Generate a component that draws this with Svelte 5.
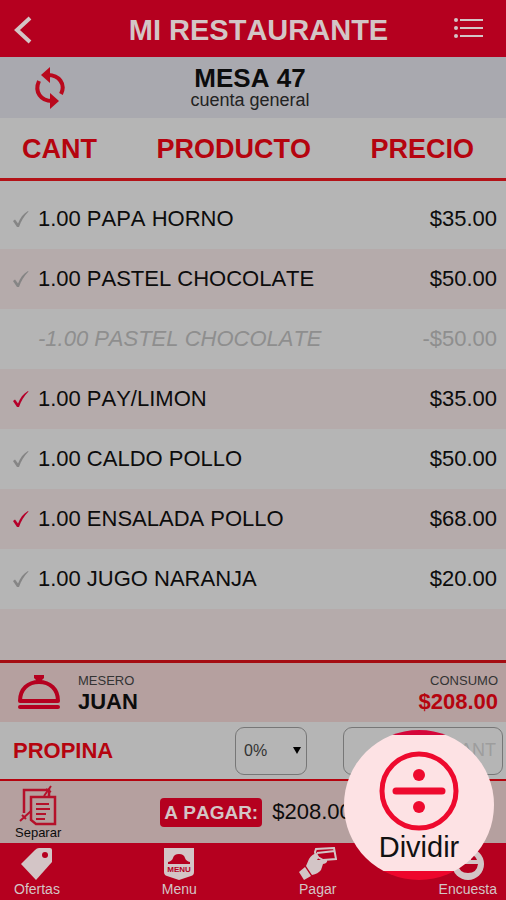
<script>
  let tip = $state("0");
  let customTip = $state("");

  const items = [
    { qty: "1.00", name: "PAPA HORNO", price: "$35.00", status: "pending" },
    { qty: "1.00", name: "PASTEL CHOCOLATE", price: "$50.00", status: "pending" },
    { qty: "-1.00", name: "PASTEL CHOCOLATE", price: "-$50.00", status: "cancelled" },
    { qty: "1.00", name: "PAY/LIMON", price: "$35.00", status: "done" },
    { qty: "1.00", name: "CALDO POLLO", price: "$50.00", status: "pending" },
    { qty: "1.00", name: "ENSALADA POLLO", price: "$68.00", status: "done" },
    { qty: "1.00", name: "JUGO NARANJA", price: "$20.00", status: "pending" }
  ];
</script>

<div class="app">
  <header class="topbar">
    <button class="icon-button" aria-label="Regresar">
      <svg width="20" height="30" viewBox="0 0 20 30">
        <path d="M17 3 L4 15 L17 27" fill="none" stroke="currentColor" stroke-width="4" />
      </svg>
    </button>
    <h1>MI RESTAURANTE</h1>
    <button class="icon-button" aria-label="Lista">
      <svg width="30" height="24" viewBox="0 0 30 24" fill="currentColor">
        <circle cx="2" cy="2" r="2" />
        <circle cx="2" cy="10" r="2" />
        <circle cx="2" cy="18" r="2" />
        <path d="M6 1h23v2H6z M6 9h23v2H6z M6 17h23v2H6z" />
      </svg>
    </button>
  </header>

  <section class="table-info">
    <button class="icon-button refresh" aria-label="Actualizar">
      <svg width="34" height="44" viewBox="0 0 34 44">
        <g fill="none" stroke="currentColor" stroke-width="4">
          <path d="M15 9 C26 9 33 18 28 28" />
          <path d="M19 35 C8 35 1 26 6 15" />
        </g>
        <path d="M17 1 V17 L8 9z M17 27 V43 L26 35z" fill="currentColor" />
      </svg>
    </button>
    <div class="table-name">
      <h2>MESA 47</h2>
      <p>cuenta general</p>
    </div>
  </section>

  <table>
    <thead>
      <tr>
        <th>CANT</th>
        <th>PRODUCTO</th>
        <th>PRECIO</th>
      </tr>
    </thead>
    <tbody>
      {#each items as item}
        <tr class={item.status}>
          <td class="qty">
            <span class="check">
              {#if item.status != "cancelled"}
                <svg width="17" height="18" viewBox="0 0 17 18">
                  <path d="M1 11 L3 9.500 L6 13.500 C8 8 11 4 16 1 L16.500 1.500 C12 6 9 11 7 17 L5 17z" fill="currentColor" />
                </svg>
              {/if}
            </span>
            {item.qty}
          </td>
          <td>{item.name}</td>
          <td class="price">{item.price}</td>
        </tr>
      {/each}
    </tbody>
  </table>
  <div class="filler"></div>

  <footer>
    <section class="summary">
      <svg class="bell" width="44" height="36" viewBox="0 0 44 36">
        <path d="M3 26 C3 14 11 7 22 7 C33 7 41 14 41 26z" fill="none" stroke="currentColor" stroke-width="4" stroke-linejoin="round" />
        <path d="M3 32 H41" stroke="currentColor" stroke-width="4" stroke-linecap="round" />
        <path d="M17 0 H27 V3 L25 5 V8 H19 V5 L17 3z" fill="currentColor" />
      </svg>
      <div class="waiter">
        <small>MESERO</small>
        <strong>JUAN</strong>
      </div>
      <div class="total">
        <small>CONSUMO</small>
        <strong>$208.00</strong>
      </div>
    </section>

    <section class="tip">
      <label for="tip">PROPINA</label>
      <div class="select">
        <select id="tip" bind:value={tip}>
          <option value="0">0%</option>
          <option value="10">10%</option>
          <option value="15">15%</option>
        </select>
        <svg width="8" height="7" viewBox="0 0 8 7"><path d="M0 0h8L4 7z" /></svg>
      </div>
      <input aria-label="Cantidad" placeholder="CANT" bind:value={customTip} />
    </section>

    <section class="pay">
      <button class="split">
        <svg width="38" height="42" viewBox="0 0 38 42" fill="none" stroke="currentColor" stroke-width="2.500">
          <path d="M5 29 V6 H30 V13" />
          <path d="M12 13 H36 V40 H17 L12 36z" />
          <path d="M17 20H30 M17 25H31 M17 30H27 M17 35H26" stroke-width="2" />
          <path d="M1 37 L12 27 M3 31 L7 35 M25 12 L32 2 M27 5 L32 8" stroke-width="2" />
        </svg>
        Separar
      </button>
      <span class="badge">A PAGAR:</span>
      <span class="amount">$208.00</span>
    </section>

    <nav>
      <a href="#ofertas">
        <svg width="34" height="34" viewBox="0 0 34 34">
          <path d="M1 17 L15 3 Q17 1 19 1 H30 Q32 1 32 3 V15 L16 33z" fill="currentColor" />
          <circle class="hole" cx="25" cy="8" r="3" />
        </svg>
        Ofertas
      </a>
      <a href="#menu">
        <svg width="34" height="34" viewBox="0 0 34 34">
          <path d="M2 1H32V25Q32 28 29 29L17 33L5 29Q2 28 2 25z" fill="currentColor" />
          <path class="hole" d="M6 15 Q10 14 11 11 Q12 7 17 7 Q22 7 23 11 Q24 14 28 15 V17 H6z" />
          <text class="hole" x="17" y="25" text-anchor="middle">MENU</text>
        </svg>
        Menu
      </a>
      <a href="#pagar">
        <svg width="38" height="34" viewBox="0 0 38 34">
          <path d="M0 25 L6 20 L12 29 L5 33z" fill="currentColor" />
          <path d="M7 19 L10 12 Q13 7 18 6 L20 10 L18 13 L28 13 Q29 16 24 17 L22 23 Q19 27 13 28z" fill="currentColor" />
          <path d="M16 5 L17 2 L35 1 L37 12 L24 13 L17 9z M18 6 L36 4" fill="none" stroke="currentColor" stroke-width="2" />
        </svg>
        Pagar
      </a>
      <a href="#encuesta">
        <svg width="34" height="34" viewBox="0 0 34 34">
          <circle cx="17" cy="17" r="16" fill="currentColor" />
          <path class="hole" d="M7 17H27Q26 26 17 26Q8 26 7 17z M8 13Q10 8 14 8V13z M20 13V8Q24 8 26 13z" />
        </svg>
        Encuesta
      </a>
    </nav>

    <button class="spotlight">
      <svg width="80" height="80" viewBox="0 0 80 80">
        <circle cx="40" cy="40" r="37" fill="none" stroke="currentColor" stroke-width="5" />
        <path d="M17 40H63" stroke="currentColor" stroke-width="7" stroke-linecap="round" />
        <g fill="currentColor">
          <circle cx="40" cy="24" r="6" />
          <circle cx="40" cy="56" r="6" />
        </g>
      </svg>
      <span>Dividir</span>
    </button>
  </footer>
</div>

<style>
  :global(body) {
    margin: 0;
  }
  .app {
    --red: #b5001f;
    --ink: #0c0c0c;
    --gray: #b5b5b5;
    --pink: #b5abab;
    --rose: #b5a09f;
    --light: #d3c5c6;
    display: flex;
    flex-direction: column;
    min-height: 100vh;
    font-family: "Liberation Sans", Arial, sans-serif;
    font-kerning: none;
    color: var(--ink);
    background: var(--gray);
  }
  h1,
  h2,
  p {
    margin: 0;
  }
  button,
  input,
  select {
    font-family: inherit;
    color: inherit;
    box-sizing: border-box;
  }
  button {
    border: none;
    padding: 0;
    background: none;
    cursor: pointer;
  }
  svg {
    display: block;
  }
  .topbar {
    display: grid;
    grid-template-columns: 50px 1fr 30px;
    align-items: center;
    height: 57px;
    padding: 2px 22px 0 13px;
    box-sizing: border-box;
    background: var(--red);
    color: var(--light);
  }
  h1 {
    font-size: 29px;
    line-height: 32px;
    text-align: center;
  }
  .table-info {
    display: grid;
    grid-template-columns: 100px 1fr 106px;
    align-items: center;
    height: 61px;
    background: #a9a9af;
  }
  .refresh {
    justify-self: center;
    color: #b9081c;
  }
  .table-name {
    text-align: center;
  }
  h2 {
    font-size: 26px;
    line-height: 24px;
  }
  .table-name p {
    font-size: 18px;
    line-height: 20px;
    color: #222;
  }
  table,
  thead,
  tbody {
    display: block;
  }
  thead tr {
    display: flex;
    justify-content: space-between;
    align-items: center;
    height: 58px;
    padding: 2px 32px 0 22px;
    border-bottom: 3px solid #b31217;
  }
  th {
    padding: 0;
    font-size: 27px;
    line-height: 30px;
    color: #b5040f;
  }
  tbody {
    padding-top: 8px;
    font-size: 22px;
  }
  tbody tr {
    display: flex;
    align-items: center;
    gap: 6px;
    height: 60px;
    padding: 0 9px 0 12px;
  }
  tbody tr:nth-child(even),
  .filler {
    background: var(--pink);
  }
  td {
    padding: 0;
  }
  .qty {
    display: flex;
    align-items: center;
  }
  .check {
    width: 26px;
    color: #858585;
  }
  .done .check {
    color: #b5002a;
  }
  .price {
    margin-left: auto;
  }
  .cancelled {
    color: #8e8e8e;
  }
  .cancelled td:not(.price) {
    font-style: italic;
  }
  .filler {
    flex: 1;
  }
  footer {
    position: relative;
  }
  .summary {
    display: flex;
    align-items: center;
    height: 59px;
    padding: 0 8px 0 17px;
    border-top: 3px solid #a50d12;
    background: var(--rose);
  }
  .bell {
    color: var(--red);
  }
  .waiter,
  .total {
    display: flex;
    flex-direction: column;
  }
  .waiter {
    margin-left: 17px;
  }
  .total {
    margin-left: auto;
    text-align: right;
  }
  small {
    font-size: 13px;
    line-height: 18px;
    color: #333;
  }
  strong {
    font-size: 22px;
    line-height: 24px;
  }
  .total strong {
    color: #b5040f;
  }
  .tip {
    display: grid;
    grid-template-columns: 1fr 72px 160px;
    column-gap: 36px;
    align-items: center;
    height: 57px;
    padding: 0 3px 0 13px;
  }
  .tip label {
    font-size: 22px;
    font-weight: bold;
    color: #b5040f;
  }
  .select {
    display: grid;
    align-items: center;
  }
  .select select,
  .select svg {
    grid-area: 1 / 1;
  }
  .select svg {
    justify-self: end;
    margin-right: 6px;
    pointer-events: none;
  }
  select,
  input {
    width: 100%;
    height: 48px;
    padding: 0 6px 0 8px;
    border: 1px solid #777;
    border-radius: 9px;
    background: transparent;
    font-size: 16px;
  }
  select {
    appearance: none;
    color: #333;
  }
  input {
    text-align: right;
    font-size: 18px;
  }
  input::placeholder {
    color: #9d9d9d;
    opacity: 1;
  }
  .pay {
    display: flex;
    align-items: center;
    height: 62px;
    padding-left: 15px;
    border-top: 2px solid #b5040f;
    background: var(--rose);
  }
  .split {
    display: flex;
    flex-direction: column;
    align-items: center;
    font-size: 13px;
    line-height: 14px;
  }
  .split svg {
    color: #b5102a;
  }
  .badge {
    margin-left: 99px;
    padding: 0 4px;
    border-radius: 4px;
    font-size: 19px;
    font-weight: bold;
    line-height: 29px;
    background: var(--red);
    color: var(--light);
  }
  .amount {
    margin-left: 10px;
    font-size: 22px;
  }
  nav {
    display: flex;
    justify-content: space-between;
    height: 57px;
    padding: 4px 9px 0 14px;
    box-sizing: border-box;
    background: var(--red);
  }
  nav a {
    display: flex;
    flex-direction: column;
    align-items: center;
    font-size: 14px;
    line-height: 16px;
    text-decoration: none;
    color: var(--light);
  }
  .hole {
    fill: var(--red);
  }
  nav text {
    font-size: 8px;
    font-weight: bold;
  }
  .spotlight {
    position: absolute;
    right: 12px;
    bottom: 20px;
    display: flex;
    flex-direction: column;
    align-items: center;
    width: 150px;
    height: 150px;
    padding-top: 21px;
    border-radius: 50%;
    background: linear-gradient(#d5063a 5px, #fde2e4 5px, #fde2e4 141px, #ee062c 141px);
  }
  .spotlight svg {
    color: #ee0a2e;
  }
  .spotlight span {
    font-size: 29px;
    line-height: 32px;
    color: #111;
  }
</style>
